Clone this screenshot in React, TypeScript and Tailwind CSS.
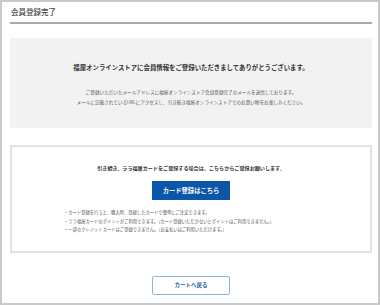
export default function App() {
  return (
    <div
      className="w-[380px] h-[305px] border-2 border-[#c9c9c9] bg-white pl-[8px] pr-[6px] text-[#333]"
      style={{ fontFamily: '"Noto Sans CJK JP", "Noto Sans", sans-serif' }}
    >
      {/* page title */}
      <div className="h-[20px] flex items-center pl-[1px] text-[7.5px] font-medium text-[#444]">
        会員登録完了
      </div>
      <div className="h-[2px] bg-[#aaaaaa]" />

      {/* thanks box */}
      <div className="mt-[14px] h-[90px] bg-[#f2f2f2] pt-[26px] flex flex-col items-center">
        <p className="text-[6.4px] leading-[8px] font-bold text-[#333]">
          福屋オンラインストアに会員情報をご登録いただきましてありがとうございます。
        </p>
        <div className="mt-[15px] text-[4.6px] leading-[10px] text-[#555] text-center">
          <p>ご登録いただいたメールアドレスに福屋オンラインストア会員登録完了のメールを送信しております。</p>
          <p>メールに記載されているURLにアクセスし、引き続き福屋オンラインストアでのお買い物をお楽しみください。</p>
        </div>
      </div>

      {/* card registration box */}
      <div className="mt-[17px] h-[108px] border-2 border-[#e2e2e2] pt-[17px] flex flex-col items-center">
        <p className="text-[5.1px] leading-[8px] font-bold text-[#333]">
          引き続き、ララ福屋カードをご登録する場合は、こちらからご登録お願いします。
        </p>
        <button className="mt-[9px] w-[78px] h-[19px] bg-[#0b56a8] text-white text-[6.3px] font-bold flex items-center justify-center">
          カード登録はこちら
        </button>
        <ul className="mt-[8px] self-start pl-[52px] text-[4.3px] leading-[8.5px] text-[#555]">
          <li>・カード登録を行うと、購入時、登録したカードで簡単にご注文できます。</li>
          <li>・ララ福屋カードのポイントがご利用できます。（カード登録いただかないとポイントはご利用できません。）</li>
          <li>・一部のクレジットカードはご登録できません。（お支払いはご利用いただけます。）</li>
        </ul>
      </div>

      {/* back to cart */}
      <div className="mt-[23px] flex justify-center">
        <button className="w-[78px] h-[19px] border border-[#8db6dd] rounded-[2px] bg-white text-[#1f5fa8] text-[5.5px] font-bold flex items-center justify-center">
          カートへ戻る
        </button>
      </div>
    </div>
  );
}
